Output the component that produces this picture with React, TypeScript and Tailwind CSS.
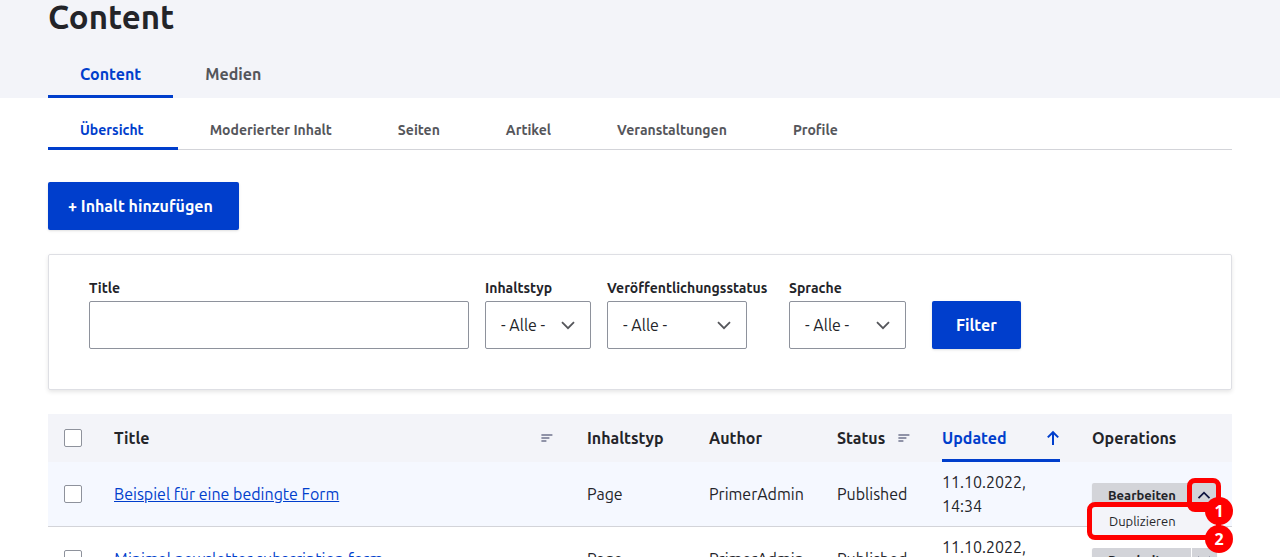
import { useState } from 'react';
import clsx from 'clsx';

interface ContentRow {
  id: string;
  title: string;
  type: string;
  author: string;
  status: string;
  updated: string;
}

const primaryTabs = ['Content', 'Medien'];

const secondaryTabs = [
  'Übersicht',
  'Moderierter Inhalt',
  'Seiten',
  'Artikel',
  'Veranstaltungen',
  'Profile',
];

const rows: ContentRow[] = [
  {
    id: 'row-1',
    title: 'Beispiel für eine bedingte Form',
    type: 'Page',
    author: 'PrimerAdmin',
    status: 'Published',
    updated: '11.10.2022, 14:34',
  },
  {
    id: 'row-2',
    title: 'Minimal newsletter subscription form',
    type: 'Page',
    author: 'PrimerAdmin',
    status: 'Published',
    updated: '11.10.2022, 14:34',
  },
];

function SortIcon() {
  return (
    <svg className="h-3 w-3 shrink-0" viewBox="0 0 12 12" fill="#9093a8" aria-hidden="true">
      <rect x="0.4" y="2" width="11" height="2" />
      <rect x="0.4" y="5" width="8" height="2" />
      <rect x="0.4" y="8" width="5" height="2" />
    </svg>
  );
}

function ArrowUpIcon() {
  return (
    <svg className="h-4 w-3.5 shrink-0" viewBox="0 0 14 16" fill="none" stroke="#003ecc" strokeWidth="2" aria-hidden="true">
      <path d="M7 15V2.4M1.8 7.4 7 2.2l5.2 5.2" />
    </svg>
  );
}

function Chevron({ className, up = false }: { className?: string; up?: boolean }) {
  return (
    <svg className={className} viewBox="0 0 14 9" fill="none" stroke="currentColor" strokeWidth="1.8" aria-hidden="true">
      <path d={up ? 'M1.5 7.2 7 1.7l5.5 5.5' : 'M1 1.2l6 6 6-6'} />
    </svg>
  );
}

interface FilterSelectProps {
  id: string;
  label: string;
  width: string;
  className?: string;
}

function FilterSelect({ id, label, width, className }: FilterSelectProps) {
  return (
    <div className={className}>
      <label htmlFor={id} className="block text-sm leading-[18px] font-bold whitespace-nowrap">
        {label}
      </label>
      <div className={clsx('relative mt-1', width)}>
        <select
          id={id}
          className="h-12 w-full appearance-none rounded-xs border border-[#8e929c] bg-white pl-[15px] text-base"
        >
          <option>- Alle -</option>
        </select>
        <Chevron className="pointer-events-none absolute top-5 right-4 h-[9px] w-3.5 text-[#55565b]" />
      </div>
    </div>
  );
}

function Operations({ open, onToggle }: { open: boolean; onToggle: () => void }) {
  return (
    <div className="relative mt-0.5 flex h-6 w-[125px] gap-px text-[#232429] shadow-xs">
      <button
        className={clsx(
          'flex-1 rounded-l-xs bg-[#d3d4d9] pl-4 text-left text-[13px] leading-6 font-bold',
          open && '-mr-px'
        )}
      >
        Bearbeiten
      </button>
      <button
        aria-label="Weitere Aktionen"
        aria-expanded={open}
        onClick={onToggle}
        className="flex w-[25px] items-center justify-center rounded-r-xs bg-[#d3d4d9] pr-px text-[#0f1540]"
      >
        <Chevron up={open} className="h-[9px] w-3.5" />
      </button>

      {open && (
        <>
          <a
            href="#"
            className="absolute top-6 left-0 z-10 block h-7 w-full bg-[#f3f4f9] pl-[17px] text-[13px] leading-7 shadow-sm"
          >
            Duplizieren
          </a>

          {/* highlighted steps */}
          <div className="pointer-events-none absolute -top-[5px] left-[95px] z-20 h-[34px] w-[34px] rounded-lg border-5 border-[#ff0000]" />
          <div className="pointer-events-none absolute top-[19px] -left-[5px] z-20 h-[38px] w-[134px] rounded-lg border-5 border-[#ff0000]" />
          <StepBadge step={1} className="top-3.5" />
          <StepBadge step={2} className="top-[42px]" />
        </>
      )}
    </div>
  );
}

function StepBadge({ step, className }: { step: number; className: string }) {
  return (
    <span
      className={clsx(
        "pointer-events-none absolute left-[113px] z-30 flex h-7 w-7 items-center justify-center rounded-full bg-[#ff0000] font-['Open_Sans',sans-serif] text-base font-bold text-white",
        className
      )}
    >
      {step}
    </span>
  );
}

function Checkbox({ label }: { label: string }) {
  return (
    <input
      type="checkbox"
      aria-label={label}
      className="block h-[18px] w-[18px] appearance-none rounded-xs border border-[#8e929c] bg-white checked:bg-[#003ecc]"
    />
  );
}

export default function App() {
  const [openRow, setOpenRow] = useState<string | null>('row-1');

  return (
    <div className="bg-white font-['Ubuntu','Noto_Sans',sans-serif] text-base leading-6 text-[#232429]">
      <header className="bg-[#f3f4f9] px-12">
        <h1 className="h-[50px] text-[33px] leading-[34px] font-bold">Content</h1>
        <nav className="flex">
          {primaryTabs.map((tab, i) => (
            <a
              key={tab}
              href="#"
              className={clsx(
                'flex h-12 items-center border-b-3 px-8 pt-0.5 font-bold',
                i === 0 ? 'border-[#003ecc] text-[#003ecc]' : 'border-transparent text-[#55565b]'
              )}
            >
              {tab}
            </a>
          ))}
        </nav>
      </header>

      <main className="px-12">
        <nav className="flex border-b border-[#d3d4d9] pt-3">
          {secondaryTabs.map((tab, i) => (
            <a
              key={tab}
              href="#"
              className={clsx(
                '-mb-px flex h-10 items-center border-b-3 pr-[34px] pl-8 pt-0.5 text-sm font-bold',
                i === 0 ? 'border-[#003ecc] text-[#003ecc]' : 'border-transparent text-[#55565b]'
              )}
            >
              {tab}
            </a>
          ))}
        </nav>

        <a
          href="#"
          className="mt-8 inline-flex h-12 items-center rounded-xs bg-[#003ecc] pr-[26px] pl-5 font-bold text-white shadow-sm"
        >
          + Inhalt hinzufügen
        </a>

        <form
          onSubmit={e => e.preventDefault()}
          className="mt-6 flex h-[136px] items-start gap-4 rounded-xs border border-[#dedfe4] px-10 pt-6 shadow-[0_2px_4px_rgba(0,0,0,0.1)]"
        >
          <div className="w-[380px]">
            <label htmlFor="title" className="block text-sm leading-[18px] font-bold">
              Title
            </label>
            <input
              id="title"
              type="text"
              className="mt-1 block h-12 w-full rounded-xs border border-[#8e929c] bg-white px-4"
            />
          </div>
          <FilterSelect id="type" label="Inhaltstyp" width="w-[106px]" />
          <FilterSelect
            id="status"
            label="Veröffentlichungsstatus"
            width="w-[140px]"
            className="min-w-[166px]"
          />
          <FilterSelect id="language" label="Sprache" width="w-[117px]" />
          <button
            type="submit"
            className="mt-[22px] ml-2.5 h-12 rounded-xs bg-[#003ecc] px-6 font-bold text-white shadow-sm"
          >
            Filter
          </button>
        </form>

        <table className="mt-6 w-full table-fixed border-separate border-spacing-0 text-left">
          <colgroup>
            <col className="w-[50px]" />
            <col />
            <col className="w-[122px]" />
            <col className="w-32" />
            <col className="w-[105px]" />
            <col className="w-[150px]" />
            <col className="w-[156px]" />
          </colgroup>
          <thead>
            <tr className="bg-[#f3f4f9]">
              <th className="px-4">
                <Checkbox label="Alle auswählen" />
              </th>
              <th className="px-4">
                <div className="flex h-12 items-center justify-between pr-0.5">
                  Title
                  <SortIcon />
                </div>
              </th>
              <th className="px-4">Inhaltstyp</th>
              <th className="px-4">Author</th>
              <th className="px-4">
                <div className="flex h-12 items-center justify-between">
                  Status
                  <SortIcon />
                </div>
              </th>
              <th className="px-4">
                <div className="flex h-12 items-center justify-between border-b-3 border-[#003ecc] pt-[3px] text-[#003ecc]">
                  Updated
                  <ArrowUpIcon />
                </div>
              </th>
              <th className="px-4">Operations</th>
            </tr>
          </thead>
          <tbody>
            {rows.map(row => (
              <tr
                key={row.id}
                className={clsx(
                  '*:h-[65px] *:border-b *:border-[#d3d4d9] *:px-4',
                  openRow === row.id && 'bg-[#f5f8ff]'
                )}
              >
                <td>
                  <Checkbox label={row.title} />
                </td>
                <td>
                  <a href="#" className="text-[#003ecc] underline">
                    {row.title}
                  </a>
                </td>
                <td>{row.type}</td>
                <td>{row.author}</td>
                <td>{row.status}</td>
                <td>{row.updated}</td>
                <td>
                  <Operations
                    open={openRow === row.id}
                    onToggle={() => setOpenRow(openRow === row.id ? null : row.id)}
                  />
                </td>
              </tr>
            ))}
          </tbody>
        </table>
      </main>
    </div>
  );
}
